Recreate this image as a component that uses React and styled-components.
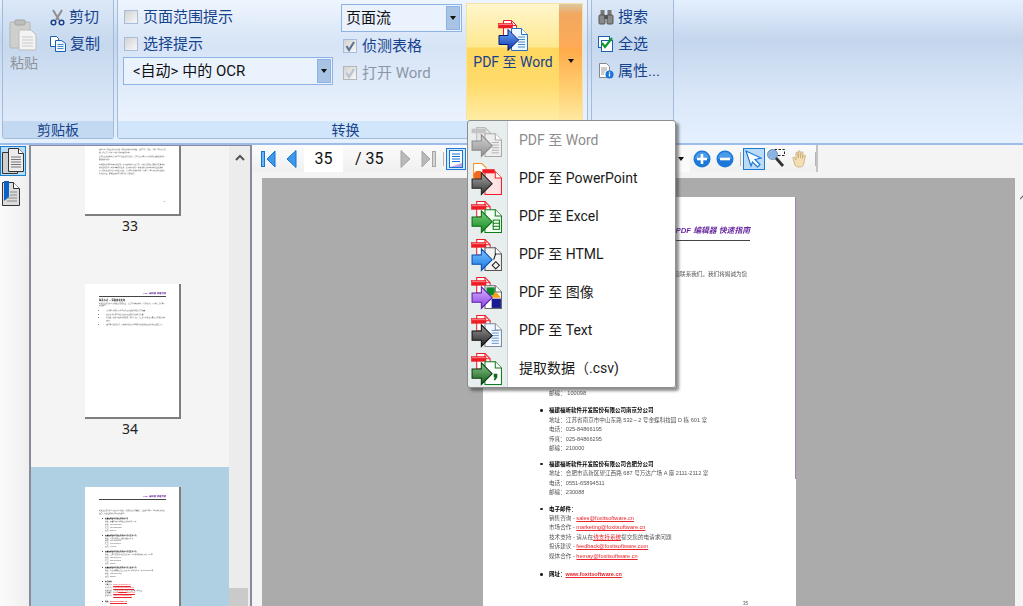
import React from 'react'
import styled, { createGlobalStyle } from 'styled-components'

const Global = createGlobalStyle`
html, body { margin: 0; padding: 0; background: #f4f4f4; }
* { box-sizing: border-box; }
body { font-family: Roboto, "Noto Sans CJK SC", sans-serif; font-size: 14px; }
`

/* ---------- icons ---------- */

function SourceDoc({ color = '#ee1c25', fill = '#fff' }) {
  return (
    <>
      <path d="M6.500.500h8l5 5v10h-13z" fill={fill} stroke={color} />
      <path d="M14.500.500v5h5" fill="none" stroke={color} />
      <rect x="1.500" y="3.500" width="14" height="4.500" fill={color} stroke={color} strokeWidth=".6" />
      <path d="M2 4.500h13" stroke="#fff" strokeOpacity=".45" />
    </>
  )
}

function TargetDoc({ stroke, fill = '#fff', children }) {
  return (
    <>
      <path d="M14.500 8.500h10l6 6v16h-16z" fill={fill} stroke={stroke} />
      <path d="M24.500 8.500v6h6" fill="#fff" stroke={stroke} />
      {children}
    </>
  )
}

function Arrow({ id, from, to, stroke }) {
  return (
    <>
      <defs>
        <linearGradient id={id} x1="0" y1="0" x2="0" y2="1">
          <stop offset="0" stopColor={from} />
          <stop offset="1" stopColor={to} />
        </linearGradient>
      </defs>
      <path d="M2 15.500h9v-6L21.500 20 11 30.500v-6H2z" fill={`url(#${id})`} stroke={stroke} />
    </>
  )
}

function DocLines({ color, x = 21, y = 17, w = 7, n = 5 }) {
  return (
    <g stroke={color} strokeWidth="1">
      {Array.from({ length: n }).map((_, i) => (
        <path key={i} d={`M${x} ${y + i * 2.5}h${w}`} />
      ))}
    </g>
  )
}

const MENU_ICONS = {
  word: (
    <>
      <path d="M6.500 2.500h8l5 5v10h-13z" fill="#e6e6e6" stroke="#b9b9b9" />
      <rect x="1.500" y="3.500" width="14" height="4.500" fill="#c4c4c4" />
      <TargetDoc stroke="#a9a9a9" fill="#eee"><DocLines color="#b5b5b5" /></TargetDoc>
      <Arrow id="aw" from="#d4d4d4" to="#8f8f8f" stroke="#8a8a8a" />
    </>
  ),
  ppt: (
    <>
      <path d="M3.500.500h8l4 4v10h-12z" fill="#fff" stroke="#f7941d" />
      <circle cx="8" cy="12" r="4.500" fill="#f26a21" />
      <TargetDoc stroke="#ee1c25" fill="#fde3e3" />
      <rect x="12" y="6" width="12" height="4" fill="#ee1c25" />
      <Arrow id="ap" from="#aaa" to="#333" stroke="#222" />
    </>
  ),
  excel: (
    <>
      <SourceDoc />
      <TargetDoc stroke="#0f7b1c" fill="#f0fff0">
        <rect x="22.500" y="18.500" width="6" height="9" fill="none" stroke="#0f7b1c" />
        <path d="M22 21.500h7M22 24.500h7" stroke="#0f7b1c" />
      </TargetDoc>
      <Arrow id="ae" from="#7ed07e" to="#0f8a1f" stroke="#0b6a14" />
    </>
  ),
  html: (
    <>
      <SourceDoc />
      <TargetDoc stroke="#555" fill="#f3f3f3">
        <path d="M25 14l-2 6" stroke="#111" fill="none" />
        <path d="M25 22l3.500 3.500-3.500 3.500-3.500-3.500z" fill="none" stroke="#222" />
      </TargetDoc>
      <Arrow id="ah" from="#7cc8ff" to="#1a73e0" stroke="#0a4fb0" />
    </>
  ),
  image: (
    <>
      <SourceDoc />
      <TargetDoc stroke="#666" fill="#fff">
        <rect x="16" y="10" width="8" height="8" fill="#0a8a2a" />
        <path d="M25 14l5 6H20z" fill="#f7a11a" />
        <rect x="21" y="21" width="9" height="9" fill="#1a1a90" />
      </TargetDoc>
      <Arrow id="ai" from="#d8b6ff" to="#8a3fe0" stroke="#5a1fa8" />
    </>
  ),
  text: (
    <>
      <SourceDoc />
      <TargetDoc stroke="#7a8ba0" fill="#f4f8ff"><DocLines color="#6d9bd0" y={15} n={6} /></TargetDoc>
      <Arrow id="at" from="#999" to="#222" stroke="#111" />
    </>
  ),
  csv: (
    <>
      <SourceDoc />
      <TargetDoc stroke="#0f7b1c" fill="#fff">
        <path d="M23 20h3.500v3.500l-2 3H23l1-3h-1z" fill="#0f6b1c" />
      </TargetDoc>
      <Arrow id="ac" from="#8fc98f" to="#125a18" stroke="#0b3d10" />
    </>
  ),
}

function MenuGlyph({ name, size = 33 }) {
  return (
    <svg width={size} height={size} viewBox="0 0 32 32">
      {MENU_ICONS[name]}
    </svg>
  )
}

function WordGlyph() {
  return (
    <svg width="32" height="34" viewBox="0 0 32 32">
      <SourceDoc />
      <TargetDoc stroke="#2a6fb8" fill="#eef6ff"><DocLines color="#4a88c8" /></TargetDoc>
      <Arrow id="abig" from="#6fb3ff" to="#0a2fa8" stroke="#001a70" />
    </svg>
  )
}

const PasteIcon = () => (
  <svg width="29" height="32" viewBox="0 0 29 32">
    <rect x="1" y="3" width="20" height="26" rx="1" fill="#cfcfcd" stroke="#b5b5b3" />
    <rect x="6" y="1" width="10" height="5" rx="1" fill="#bdbdbb" stroke="#a5a5a3" />
    <path d="M10 11h12l5 5v15H10z" fill="#f3f3f3" stroke="#bbb" />
    <path d="M13 18h11M13 21h11M13 24h11M13 27h11" stroke="#c9c9c9" />
  </svg>
)

const CutIcon = () => (
  <svg width="15" height="17" viewBox="0 0 15 17">
    <path d="M3 1l6 10M12 1L6 11" stroke="#8d8d8d" strokeWidth="2" fill="none" />
    <circle cx="3.500" cy="13.500" r="2.300" fill="#dfe8f5" stroke="#1b3f8b" strokeWidth="1.500" />
    <circle cx="11.500" cy="13.500" r="2.300" fill="#dfe8f5" stroke="#1b3f8b" strokeWidth="1.500" />
  </svg>
)

const CopyIcon = () => (
  <svg width="16" height="16" viewBox="0 0 16 16">
    <path d="M.5.500h6l2 2v8h-8z" fill="#fff" stroke="#1a5fb0" />
    <path d="M5.500 4.500h6l4 3v8h-10z" fill="#eef6ff" stroke="#1a5fb0" />
    <path d="M7.500 8.500h6M7.500 10.500h6M7.500 12.500h6" stroke="#4a88c8" />
  </svg>
)

const BinocularsIcon = () => (
  <svg width="16" height="16" viewBox="0 0 16 16">
    <rect x="2.500" y="1" width="4" height="5" fill="#777" />
    <rect x="9.500" y="1" width="4" height="5" fill="#777" />
    <rect x="1" y="6" width="6" height="9" rx="1" fill="#8a8a8a" stroke="#555" />
    <rect x="9" y="6" width="6" height="9" rx="1" fill="#8a8a8a" stroke="#555" />
    <rect x="6" y="6" width="4" height="4" fill="#555" />
  </svg>
)

const SelectAllIcon = () => (
  <svg width="16" height="16" viewBox="0 0 16 16">
    <rect x=".5" y=".5" width="11" height="11" fill="#fff" stroke="#1a5fb0" />
    <rect x="3.500" y="4.500" width="11" height="11" fill="#fff" stroke="#1a5fb0" />
    <path d="M4 7l3 4 7-9" stroke="#0f9a2a" strokeWidth="2.200" fill="none" />
  </svg>
)

const PropertiesIcon = () => (
  <svg width="16" height="16" viewBox="0 0 16 16">
    <path d="M1.500.500h7l3 3v11h-10z" fill="#fff" stroke="#888" />
    <path d="M3 5h6M3 7h6M3 9h4M3 11h3" stroke="#999" />
    <circle cx="11.500" cy="11.500" r="4" fill="#1a73d8" />
    <path d="M11.500 10.500v3M11.500 8.800v1" stroke="#fff" strokeWidth="1.300" />
  </svg>
)

const FirstIcon = () => (
  <svg width="15" height="18" viewBox="0 0 15 18">
    <rect x=".5" y="1.500" width="3" height="15" fill="#6db6f5" stroke="#1273d0" />
    <path d="M14 1v16L6 9z" fill="#3f98e8" stroke="#1273d0" />
  </svg>
)
const PrevIcon = () => (
  <svg width="11" height="18" viewBox="0 0 11 18">
    <path d="M10 .5v17L1 9z" fill="#3f98e8" stroke="#1273d0" />
  </svg>
)
const NextIcon = () => (
  <svg width="11" height="18" viewBox="0 0 11 18">
    <path d="M1 .5v17L10 9z" fill="#b9b9b9" stroke="#a6a6a6" />
  </svg>
)
const LastIcon = () => (
  <svg width="15" height="18" viewBox="0 0 15 18">
    <path d="M1 1v16l8-8z" fill="#b9b9b9" stroke="#a6a6a6" />
    <rect x="11.500" y="1.500" width="3" height="15" fill="#d6d6d6" stroke="#a6a6a6" />
  </svg>
)

const PageViewIcon = () => (
  <svg width="14" height="18" viewBox="0 0 14 18">
    <rect x=".5" y=".5" width="13" height="17" fill="#fff" stroke="#1273d0" />
    <path d="M3 4h8M3 6.500h8M3 9h8M3 11.500h8" stroke="#1273d0" />
    <path d="M1 17l12-4v4z" fill="#b9a5e8" />
  </svg>
)

const RoundIcon = ({ plus }) => (
  <svg width="18" height="18" viewBox="0 0 18 18">
    <circle cx="9" cy="9" r="8.500" fill="#1b78d8" />
    <path d="M2 9a7 7 0 0 1 14 0z" fill="#4c9be8" />
    <path d="M4 9h10" stroke="#fff" strokeWidth="2.600" />
    {plus && <path d="M9 4v10" stroke="#fff" strokeWidth="2.600" />}
  </svg>
)

const PointerIcon = () => (
  <svg width="18" height="18" viewBox="0 0 18 18">
    <path d="M1 1l15 7-6 1.500 5 5-2.500 2.500-5-5L6 16z" fill="#fff" stroke="#1b78d8" strokeWidth="1.200" />
  </svg>
)

const MarqueeIcon = () => (
  <svg width="19" height="19" viewBox="0 0 19 19">
    <rect x="7.500" y=".5" width="10" height="6" fill="none" stroke="#222" strokeDasharray="2.500 1.500" />
    <circle cx="5.500" cy="5.500" r="5" fill="#8cb4e2" stroke="#6f93bd" />
    <path d="M9 9l7 8" stroke="#333" strokeWidth="2.800" />
  </svg>
)

const HandIcon = () => (
  <svg width="16" height="18" viewBox="0 0 16 18">
    <path d="M3 15L1 8.500c-.5-1.500 1-2 1.700-.8L4 10V3c0-1.300 1.700-1.300 1.800 0L6.300 8V1.700c0-1.300 1.800-1.300 1.900 0L8.500 8l.8-5.500c.2-1.200 1.900-1 1.700.3L10.300 8.500l1.500-3c.5-1.100 2-.6 1.600.6L11.800 13c-.3 2.500-1.500 4-4 4S3.800 16.500 3 15z" fill="#f4dfb4" stroke="#c8a870" strokeWidth=".8" />
  </svg>
)

const PagesIcon = () => (
  <svg width="24" height="28" viewBox="0 0 24 28">
    <path d="M1.500 5.500h11l4 4v17h-15z" fill="#cfcfcf" stroke="#333" />
    <path d="M7.500 1.500h10l5 5v18h-15z" fill="#ececec" stroke="#333" />
    <path d="M17.500 1.500v5h5" fill="#fff" stroke="#333" />
    <path d="M10 10h10M10 12.500h10M10 15h10M10 17.500h10M10 20h10" stroke="#777" />
  </svg>
)

const BookmarkIcon = () => (
  <svg width="20" height="26" viewBox="0 0 20 26">
    <path d="M1.500 1.500h11l6 6v17h-17z" fill="#dcdcdc" stroke="#333" />
    <path d="M12.500 1.500v6h6" fill="#fff" stroke="#333" />
    <path d="M3 0h5v16l-5 4z" fill="#0a62c8" />
    <path d="M9 11h7M9 14h7M6 17h10M6 20h10" stroke="#888" />
  </svg>
)

const Caret = styled.span`
  display: block;
  width: 0;
  height: 0;
  border-left: 3.5px solid transparent;
  border-right: 3.5px solid transparent;
  border-top: 4px solid #111;
`

/* ---------- ribbon ---------- */

const Page = styled.div`
  position: relative;
  width: 1023px;
  height: 606px;
  overflow: hidden;
  display: flex;
  flex-direction: column;
  background: #f4f4f4;
`

const Ribbon = styled.div`
  height: 145px;
  flex: none;
  padding: 0 0 4px 2px;
  display: flex;
  gap: 3px;
  background: linear-gradient(#e4f0fe 0, #c4d6ed 40px, #dbe8f9 100px, #e4f0fe 141px);
  border-bottom: 2px solid #9dbcec;
`

const Group = styled.section`
  width: ${(p) => p.$width}px;
  height: 139px;
  flex: none;
  display: flex;
  flex-direction: column;
  border: 1px solid #a3bbd9;
  border-top: none;
  border-radius: 0 0 3px 3px;
  background: ${(p) => p.$soft
    ? 'linear-gradient(#eef5fe 0, #d6e4f6 45px, #eaf2fd 120px)'
    : 'linear-gradient(#dbe8f8 0, #c6d8ee 45px, #deeafa 120px)'};
`

const GroupBody = styled.div`
  height: 121px;
  flex: none;
  display: flex;
`

const GroupLabel = styled.div`
  flex: 1;
  padding-right: ${(p) => p.$shift || 0}px;
  display: flex;
  align-items: center;
  justify-content: center;
  font-size: 14px;
  line-height: 16px;
  color: #15428b;
  background: ${(p) => p.$soft ? '#d1e5fb' : '#c3d9f1'};
`

const PasteButton = styled.div`
  width: 44px;
  padding: 19px 0 0 6px;
  display: flex;
  flex-direction: column;
  align-items: flex-start;
  gap: 1px;
  font-size: 14px;
  color: #8f9499;
  span { margin-left: 1px; }
`

const ActionColumn = styled.div`
  padding: ${(p) => p.$top}px 0 0 ${(p) => p.$left}px;
  display: flex;
  flex-direction: column;
  gap: 7px;
`

const Action = styled.div`
  height: 20px;
  display: flex;
  align-items: center;
  gap: 4px;
  font-size: 15px;
  line-height: 18px;
  color: #15428b;
`

const OptionColumn = styled.div`
  width: ${(p) => p.$width}px;
  margin-left: ${(p) => p.$left}px;
  padding-top: ${(p) => p.$top}px;
  display: flex;
  flex-direction: column;
`

const CheckRow = styled.label`
  height: 27px;
  display: flex;
  align-items: center;
  gap: 5px;
  padding-left: ${(p) => p.$indent || 1}px;
  font-size: 15px;
  line-height: 18px;
  color: ${(p) => p.$disabled ? '#8b97a8' : '#15428b'};
`

const CheckBox = styled.span`
  width: 14px;
  height: 14px;
  flex: none;
  display: flex;
  align-items: center;
  justify-content: center;
  border: 1px solid ${(p) => p.$disabled ? '#b5b5b5' : '#a6bddb'};
  background: linear-gradient(135deg, #d3d3d3, #f7f7f7);
`

function Check({ label, checked, disabled, indent }) {
  return (
    <CheckRow $disabled={disabled} $indent={indent}>
      <CheckBox $disabled={disabled}>
        {checked && (
          <svg width="12" height="12" viewBox="0 0 12 12">
            <path d="M2.500 6l2.500 4 5-8" fill="none" stroke={disabled ? '#b8c2cf' : '#5c7696'} strokeWidth="2.200" />
          </svg>
        )}
      </CheckBox>
      {label}
    </CheckRow>
  )
}

const Combo = styled.div`
  height: 28px;
  width: ${(p) => p.$width}px;
  flex: none;
  padding: 1px;
  display: flex;
  align-items: stretch;
  border: 1px solid #8db2e3;
  background: #eaf2fe;
  font-size: 15px;
  line-height: 18px;
  color: #111;
`

const ComboText = styled.div`
  flex: 1;
  padding-left: ${(p) => p.$pad}px;
  display: flex;
  align-items: center;
  white-space: pre;
`

const ComboArrow = styled.div`
  width: 14px;
  display: flex;
  align-items: center;
  justify-content: center;
  border: 1px solid #8db2e3;
  background: #a9c3e4;
`

const BigSplit = styled.div`
  width: 117px;
  height: 117px;
  margin: 3px 0 0 4px;
  flex: none;
  display: flex;
  border: 1px solid #f5e2a8;
  border-bottom: none;
`

const BigMain = styled.div`
  width: 92px;
  padding-top: 15px;
  display: flex;
  flex-direction: column;
  align-items: center;
  font-size: 14px;
  line-height: 18px;
  color: #15428b;
  background: linear-gradient(#fff6cc 0, #ffe890 43px, #ffd75f 44px, #ffdb6c 80px, #ffedA6 117px);
  span { margin-top: 0; white-space: nowrap; }
`

const BigDrop = styled.div`
  flex: 1;
  padding-top: 55px;
  display: flex;
  justify-content: center;
  background: linear-gradient(#dcc7a2 0, #f0a85f 10px, #ffab58 43px, #ffa94a 44px, #ffcf70 85px, #ffe9a2 117px);
`

/* ---------- left panels ---------- */

const Workspace = styled.div`
  flex: 1;
  min-height: 0;
  display: flex;
`

const Rail = styled.div`
  width: 29px;
  flex: none;
  padding-top: 1px;
  display: flex;
  flex-direction: column;
  gap: 4px;
  background: linear-gradient(90deg, #fbfbfb, #efefef);
`

const RailButton = styled.div`
  width: 26px;
  height: ${(p) => p.$h}px;
  display: flex;
  align-items: center;
  border: 1px solid ${(p) => p.$active ? '#1b7fd0' : 'transparent'};
  background: ${(p) => p.$active ? '#bcdcf6' : 'transparent'};
`

const ThumbPanel = styled.div`
  width: 223px;
  flex: none;
  display: flex;
  border: 1px solid #878b9c;
  border-width: 1px 2px 0 2px;
`

const ThumbList = styled.div`
  width: 198px;
  flex: none;
  display: flex;
  flex-direction: column;
  background: #f4f4f4;
`

const ThumbCell = styled.div`
  height: ${(p) => p.$h}px;
  flex: none;
  padding-top: ${(p) => p.$pad}px;
  display: flex;
  flex-direction: column;
  align-items: center;
  background: ${(p) => p.$selected ? '#afcfe2' : 'transparent'};
`

const ThumbClip = styled.div`
  width: 96px;
  height: ${(p) => p.$h}px;
  margin-left: 6px;
  flex: none;
  overflow: hidden;
  display: flex;
  flex-direction: column;
  justify-content: ${(p) => p.$bottom ? 'flex-end' : 'flex-start'};
  background: #fff;
  border-right: 2px solid #7e7e7e;
  border-bottom: 2px solid #7e7e7e;
  filter: blur(0.4px);
`

const ThumbSheet = styled.div`
  zoom: 0.303;
  width: 313px;
  flex: none;
`

const ThumbNumber = styled.div`
  font-family: "Noto Sans", sans-serif;
  font-size: 14px;
  line-height: 20px;
  color: #222;
`

const ScrollTrack = styled.div`
  width: 21px;
  flex: 1;
  display: flex;
  flex-direction: column;
  align-items: center;
  background: #ececec;
`

const ScrollUp = styled.div`
  height: 22px;
  display: flex;
  align-items: center;
`

const ScrollThumb = styled.div`
  width: 100%;
  height: 18px;
  margin-top: auto;
  background: #cacaca;
  border-right: 2px solid #ececec;
`

/* ---------- viewer ---------- */

const Viewer = styled.div`
  flex: 1;
  min-width: 0;
  display: flex;
  flex-direction: column;
  background: #f4f4f4;
`

const Toolbar = styled.div`
  width: 566px;
  height: 27px;
  flex: none;
  padding: 0 0 0 9px;
  display: flex;
  align-items: center;
  background: linear-gradient(#fbfbfb, #f0f0f0);
  border-right: 2px solid #c4c4c4;
`

const ToolSlot = styled.div`
  margin-left: ${(p) => p.$gap || 0}px;
  display: flex;
  align-items: center;
  flex: none;
`

const PageInput = styled.div`
  width: 39px;
  height: 26px;
  margin-left: 7px;
  flex: none;
  display: flex;
  align-items: center;
  justify-content: center;
  background: #fff;
  font-size: 16px;
  color: #111;
`

const PageTotal = styled.div`
  margin-left: 12px;
  width: 33px;
  flex: none;
  font-size: 16px;
  color: #111;
  white-space: nowrap;
`

const ToolSep = styled.span`
  width: 1px;
  height: 14px;
  flex: none;
  margin-left: ${(p) => p.$gap}px;
  background: #b5b5b5;
`

const ToolButton = styled.div`
  width: ${(p) => p.$w}px;
  height: 22px;
  margin-left: ${(p) => p.$gap}px;
  flex: none;
  display: flex;
  align-items: center;
  justify-content: center;
  border: 1px solid #1c7bd6;
  background: ${(p) => p.$tint};
`

const ZoomBox = styled.div`
  width: 60px;
  height: 26px;
  margin-left: 164px;
  padding-right: 6px;
  flex: none;
  display: flex;
  align-items: center;
  justify-content: flex-end;
  background: #fafafa;
`

const ViewArea = styled.div`
  flex: 1;
  min-height: 0;
  margin-top: 6px;
  padding-left: 10px;
  display: flex;
`

const Canvas = styled.div`
  width: 753px;
  flex: none;
  padding: 19px 0 0 221px;
  overflow: hidden;
  background: #ababab;
`

const EdgeMark = styled.div`
  padding: 9px 0 0 5px;
`

const Sheet = styled.article`
  position: relative;
  width: 313px;
  height: 445px;
  background: #fff;
  font-family: "Liberation Sans", "Noto Sans CJK SC", sans-serif;
  font-size: 5.6px;
  line-height: 9.45px;
  color: #555;
  padding: ${(p) => p.$top || 28}px 46px 0 66px;
  filter: ${(p) => p.$blur ? 'blur(0.6px)' : 'none'};

  &::after {
    content: "";
    position: absolute;
    top: 0;
    right: 0;
    width: 1px;
    height: 282px;
    background: ${(p) => p.$blur ? '#a77fb0' : 'transparent'};
  }
`

const SheetTitle = styled.div`
  height: 16px;
  margin-left: -20px;
  text-align: right;
  font-size: 7.8px;
  line-height: 12px;
  font-weight: 700;
  font-style: italic;
  color: #6a2ca0;
  border-bottom: 1.5px solid #444;
`

const SheetHeading = styled.div`
  margin-top: 4px;
  margin-left: -20px;
  font-size: 7.5px;
  line-height: 10px;
  font-weight: 700;
  color: #111;
`

const Intro = styled.p`
  margin: 0 0 0 -20px;
  padding-top: 29px;
  width: 221px;
`

const Block = styled.div`
  position: relative;
  margin-top: ${(p) => p.$gap}px;
`

const BlockHead = styled.div`
  font-weight: 700;
  color: #000;
  font-size: 5.5px;
  &::before {
    content: "";
    position: absolute;
    left: -9px;
    top: 3px;
    width: 2.500px;
    height: 2.500px;
    border-radius: 50%;
    background: #222;
  }
`

const Row = styled.div`
  white-space: nowrap;
`

const Mail = styled.span`
  color: #e8242c;
  text-decoration: underline;
`

const PageNo = styled.div`
  position: absolute;
  right: 48px;
  top: 402px;
  font-size: 4.5px;
`

const Para = styled.p`
  margin: 0 0 7px -20px;
  font-size: 5.6px;
`

const Bullet = styled.li`
  margin-bottom: 2px;
`

const BulletList = styled.ul`
  margin: 0 0 0 -8px;
  padding-left: 12px;
`

/* ---------- menu ---------- */

const Menu = styled.div`
  position: absolute;
  left: 467px;
  top: 120px;
  width: 209px;
  height: 268px;
  display: flex;
  flex-direction: column;
  padding-top: 1px;
  border: 1px solid #8d8d8d;
  border-radius: 3px;
  background: linear-gradient(90deg, #e8eeee 39px, #c9d3d3 39px, #c9d3d3 40px, #fff 40px);
  box-shadow: 3px 3px 3px rgba(50, 50, 50, 0.55);
`

const MenuRow = styled.div`
  height: 38px;
  flex: none;
  display: flex;
  align-items: center;
  gap: 16px;
  padding-left: 2px;
  font-size: 14px;
  line-height: 18px;
  color: ${(p) => p.$disabled ? '#8c8c8c' : '#1a1a1a'};
  span { white-space: nowrap; margin-top: -2px; }
`

const MENU_ITEMS = [
  ['word', 'PDF 至 Word', true],
  ['ppt', 'PDF 至 PowerPoint'],
  ['excel', 'PDF 至 Excel'],
  ['html', 'PDF 至 HTML'],
  ['image', 'PDF 至 图像'],
  ['text', 'PDF 至 Text'],
  ['csv', '提取数据（.csv)'],
]

function GuideSheet({ blur }) {
  return (
    <Sheet $blur={blur}>
      <SheetTitle>PDF 编辑器 快速指南</SheetTitle>
      <Intro>如果您在使用本产品的过程中遇到了任何问题或者建议，请您联系我们。我们将竭诚为您服务，欢迎您随时与我们取得联系。</Intro>
      <Block $gap={8}>
        <BlockHead>福建福昕软件开发股份有限公司</BlockHead>
        <Row>地址：福建省福州市鼓楼区软件大道 89 号</Row>
        <Row>电话：0591-38509866</Row>
        <Row>传真：0591-38509859</Row>
        <Row>邮编：350003</Row>
      </Block>
      <Block $gap={7}>
        <BlockHead>福建福昕软件开发股份有限公司北京分公司</BlockHead>
        <Row>地址：北京市海淀区上地信息路 12 号</Row>
        <Row>电话：010-50951668</Row>
        <Row>传真：010-50951666</Row>
        <Row>邮编： 100098</Row>
      </Block>
      <Block $gap={8}>
        <BlockHead>福建福昕软件开发股份有限公司南京分公司</BlockHead>
        <Row>地址：江苏省南京市中山东路 532－2 号金蝶科技园 D 栋 601 室</Row>
        <Row>电话：025-84866195</Row>
        <Row>传真：025-84866295</Row>
        <Row>邮编：210000</Row>
      </Block>
      <Block $gap={6}>
        <BlockHead>福建福昕软件开发股份有限公司合肥分公司</BlockHead>
        <Row>地址：合肥市高新区望江西路 687 号万达广场 A 座 2111-2112 室</Row>
        <Row>电话：0551-65894511</Row>
        <Row>邮编：230088</Row>
      </Block>
      <Block $gap={7}>
        <BlockHead>电子邮件：</BlockHead>
        <Row>销售咨询 - <Mail>sales@foxitsoftware.cn</Mail></Row>
        <Row>市场合作 - <Mail>marketing@foxitsoftware.cn</Mail></Row>
        <Row>技术支持 - 请从在<Mail>线支持系统</Mail>提交您的电请求问题</Row>
        <Row>投诉建议 - <Mail>feedback@foxitsoftware.com</Mail></Row>
        <Row>媒体合作 - <Mail>hemay@foxitsoftware.cn</Mail></Row>
      </Block>
      <Block $gap={9}>
        <BlockHead>网址：<Mail>www.foxitsoftware.cn</Mail></BlockHead>
      </Block>
      <PageNo>35</PageNo>
    </Sheet>
  )
}

function ProseSheet() {
  return (
    <Sheet $top={226}>
      <Para>福昕 PDF 编辑器为用户提供了完整的文档处理功能，包括查看、编辑、注释、签名以及转换，适用于日常办公中的各种场景和需求。</Para>
      <Para>您可以在软件帮助菜单中查看更多的使用说明，也可以访问官方网站以获取最新的版本信息和技术支持。</Para>
      <Para>本指南中的所有内容仅供参考。未经福昕软件书面许可，不得以任何形式复制或传播本文档的任何部分。文档内容如有更改，恕不另行通知。福昕软件保留对本文档的最终解释权。如果您在使用过程中遇到问题，请与我们的技术支持人员联系，我们将尽快为您解决相关的问题，感谢您选择使用我们的产品和服务。</Para>
      <PageNo>33</PageNo>
    </Sheet>
  )
}

function ContactSheet() {
  return (
    <Sheet>
      <SheetTitle>PDF 编辑器 快速指南</SheetTitle>
      <SheetHeading>联系方式 － 获取技术支持</SheetHeading>
      <Para>如果您在使用本产品时遇到任何问题，请先查阅帮助文档，或者通过以下几种方式与我们取得联系。</Para>
      <BulletList>
        <Bullet>访问我们的官方网站查阅常见问题解答和知识库文章。</Bullet>
        <Bullet>通过在线支持系统提交您的问题和相关的描述信息。</Bullet>
        <Bullet>发送电子邮件至技术支持邮箱，我们会在一个工作日内给您回复以及后续的处理意见。</Bullet>
        <Bullet>拨打客户服务热线，与技术支持工程师直接沟通您所遇到的具体问题和情况。</Bullet>
      </BulletList>
    </Sheet>
  )
}

export default function App() {
  return (
    <Page>
      <Global />
      <Ribbon>
        <Group $width={112}>
          <GroupBody>
            <PasteButton>
              <PasteIcon />
              <span>粘贴</span>
            </PasteButton>
            <ActionColumn $top={7} $left={3}>
              <Action><CutIcon />剪切</Action>
              <Action><CopyIcon />复制</Action>
            </ActionColumn>
          </GroupBody>
          <GroupLabel>剪贴板</GroupLabel>
        </Group>

        <Group $width={471} $soft>
          <GroupBody>
            <OptionColumn $width={214} $left={5} $top={3}>
              <Check label="页面范围提示" />
              <Check label="选择提示" />
              <Combo $width={210}>
                <ComboText $pad={8}>&lt;自动&gt; 中的 OCR</ComboText>
                <ComboArrow><Caret /></ComboArrow>
              </Combo>
            </OptionColumn>
            <OptionColumn $width={121} $left={4} $top={4}>
              <Combo $width={121}>
                <ComboText $pad={3}>页面流</ComboText>
                <ComboArrow><Caret /></ComboArrow>
              </Combo>
              <Check label="侦测表格" checked indent={2} />
              <Check label="打开 Word" checked disabled indent={2} />
            </OptionColumn>
            <BigSplit>
              <BigMain>
                <WordGlyph />
                <span>PDF 至 Word</span>
              </BigMain>
              <BigDrop><Caret /></BigDrop>
            </BigSplit>
          </GroupBody>
          <GroupLabel $soft $shift={14}>转换</GroupLabel>
        </Group>

        <Group $width={83}>
          <ActionColumn $top={7} $left={6}>
            <Action><BinocularsIcon />搜索</Action>
            <Action><SelectAllIcon />全选</Action>
            <Action><PropertiesIcon />属性...</Action>
          </ActionColumn>
        </Group>
      </Ribbon>

      <Workspace>
        <Rail>
          <RailButton $active $h={30}><PagesIcon /></RailButton>
          <RailButton $h={28}><BookmarkIcon /></RailButton>
        </Rail>

        <ThumbPanel>
          <ThumbList>
            <ThumbCell $h={138}>
              <ThumbClip $h={70} $bottom>
                <ThumbSheet><ProseSheet /></ThumbSheet>
              </ThumbClip>
              <ThumbNumber>33</ThumbNumber>
            </ThumbCell>
            <ThumbCell $h={183}>
              <ThumbClip $h={135}>
                <ThumbSheet><ContactSheet /></ThumbSheet>
              </ThumbClip>
              <ThumbNumber>34</ThumbNumber>
            </ThumbCell>
            <ThumbCell $h={140} $pad={20} $selected>
              <ThumbClip $h={135}>
                <ThumbSheet><GuideSheet /></ThumbSheet>
              </ThumbClip>
            </ThumbCell>
          </ThumbList>
          <ScrollTrack>
            <ScrollUp>
              <svg width="10" height="7" viewBox="0 0 10 7">
                <path d="M1 6l4-4 4 4" fill="none" stroke="#555" strokeWidth="2" />
              </svg>
            </ScrollUp>
            <ScrollThumb />
          </ScrollTrack>
        </ThumbPanel>

        <Viewer>
          <Toolbar>
            <ToolSlot><FirstIcon /></ToolSlot>
            <ToolSlot $gap={10}><PrevIcon /></ToolSlot>
            <PageInput>35</PageInput>
            <PageTotal>/ 35</PageTotal>
            <ToolSlot $gap={12}><NextIcon /></ToolSlot>
            <ToolSlot $gap={10}><LastIcon /></ToolSlot>
            <ToolSep $gap={7} />
            <ToolButton $w={20} $gap={2} $tint="#d6e8f8"><PageViewIcon /></ToolButton>
            <ZoomBox><Caret /></ZoomBox>
            <ToolSlot $gap={3}><RoundIcon plus /></ToolSlot>
            <ToolSlot $gap={5}><RoundIcon /></ToolSlot>
            <ToolSep $gap={6} />
            <ToolButton $w={22} $gap={2} $tint="#bcdcf6"><PointerIcon /></ToolButton>
            <ToolSlot $gap={2}><MarqueeIcon /></ToolSlot>
            <ToolSlot $gap={6}><HandIcon /></ToolSlot>
            <ToolSep $gap={7} />
          </Toolbar>
          <ViewArea>
            <Canvas>
              <GuideSheet blur />
            </Canvas>
            <EdgeMark>
              <svg width="5" height="5" viewBox="0 0 5 5">
                <path d="M0 4l3-3 2 2" fill="none" stroke="#666" strokeWidth="1.200" />
              </svg>
            </EdgeMark>
          </ViewArea>
        </Viewer>
      </Workspace>

      <Menu>
        {MENU_ITEMS.map(([icon, label, disabled]) => (
          <MenuRow key={icon} $disabled={disabled}>
            <MenuGlyph name={icon} />
            <span>{label}</span>
          </MenuRow>
        ))}
      </Menu>
    </Page>
  )
}
